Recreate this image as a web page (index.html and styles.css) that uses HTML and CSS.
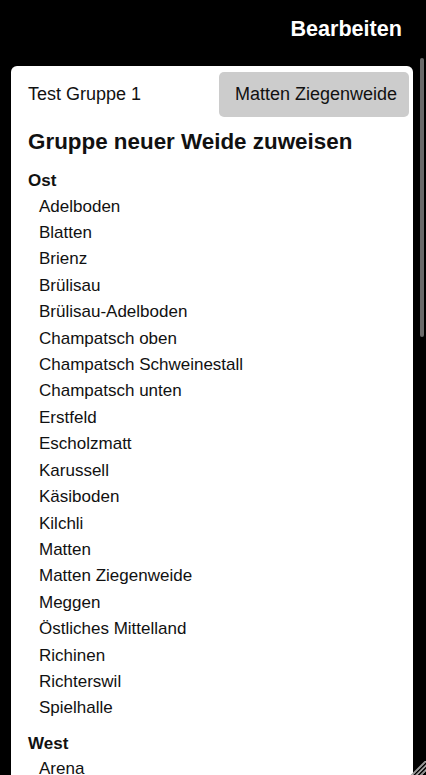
FILE: index.html
```html
<!DOCTYPE html>
<html lang="de">
<head>
<meta charset="utf-8">
<title>Bearbeiten</title>
<link rel="stylesheet" href="styles.css">
</head>
<body>
<header class="topbar">
  <h1 class="topbar-title">Bearbeiten</h1>
</header>
<div class="scroll-frame">
  <main class="scroller">
    <section class="card">
      <div class="card-row">
        <span class="group-name">Test Gruppe 1</span>
        <button class="current-btn" type="button">Matten Ziegenweide</button>
      </div>
      <h2 class="card-title">Gruppe neuer Weide zuweisen</h2>
      <div class="region">
        <h3 class="region-name">Ost</h3>
        <ul class="pasture-list">
          <li class="pasture">Adelboden</li>
          <li class="pasture">Blatten</li>
          <li class="pasture">Brienz</li>
          <li class="pasture">Brülisau</li>
          <li class="pasture">Brülisau-Adelboden</li>
          <li class="pasture">Champatsch oben</li>
          <li class="pasture">Champatsch Schweinestall</li>
          <li class="pasture">Champatsch unten</li>
          <li class="pasture">Erstfeld</li>
          <li class="pasture">Escholzmatt</li>
          <li class="pasture">Karussell</li>
          <li class="pasture">Käsiboden</li>
          <li class="pasture">Kilchli</li>
          <li class="pasture">Matten</li>
          <li class="pasture">Matten Ziegenweide</li>
          <li class="pasture">Meggen</li>
          <li class="pasture">Östliches Mittelland</li>
          <li class="pasture">Richinen</li>
          <li class="pasture">Richterswil</li>
          <li class="pasture">Spielhalle</li>
        </ul>
      </div>
      <div class="region">
        <h3 class="region-name">West</h3>
        <ul class="pasture-list">
          <li class="pasture">Arena</li>
        </ul>
      </div>
    </section>
  </main>
  <div class="scroll-thumb" aria-hidden="true"></div>
  <svg class="resize-grip" aria-hidden="true" width="16" height="14" viewBox="0 0 16 14">
    <line x1="1" y1="14.5" x2="16.5" y2="-1" stroke="#9a9a9a" stroke-width="1.2"/>
    <line x1="2.2" y1="14.5" x2="17.7" y2="-1" stroke="#e8e8e8" stroke-width="0.8"/>
    <line x1="5.5" y1="14.5" x2="17" y2="3" stroke="#9a9a9a" stroke-width="1.2"/>
    <line x1="6.7" y1="14.5" x2="18.2" y2="3" stroke="#e8e8e8" stroke-width="0.8"/>
    <line x1="10" y1="14.5" x2="17.5" y2="7" stroke="#9a9a9a" stroke-width="1.2"/>
    <line x1="11.2" y1="14.5" x2="18.7" y2="7" stroke="#e8e8e8" stroke-width="0.8"/>
  </svg>
</div>
</body>
</html>
```
FILE: styles.css
```css
html, body {
  margin: 0;
  padding: 0;
  background: #000;
  height: 100%;
  overflow: hidden;
}

body {
  font-family: "Liberation Sans", Arial, sans-serif;
  color: #111;
}

.topbar {
  box-sizing: border-box;
  height: 56px;
  padding: 17px 24px 0;
  display: flex;
  justify-content: flex-end;
}

.topbar-title {
  margin: 0;
  font-size: 21.6px;
  font-weight: bold;
  line-height: 1.1;
  color: #fff;
}

.scroll-frame {
  position: relative;
  height: 719px;
}

.scroller {
  height: 100%;
  overflow: hidden;
  background: #000;
}

.scroll-thumb {
  position: absolute;
  top: 2px;
  right: 2px;
  width: 4px;
  height: 279px;
  border-radius: 2px;
  background: #6a6a6a;
}

.resize-grip {
  position: absolute;
  right: 0;
  bottom: 0;
}

.card {
  margin: 10px 13px 20px 11px;
  padding: 6px 4px 8px 17px;
  background: #fff;
  border-radius: 6px;
}

.card-row {
  display: flex;
  align-items: center;
  justify-content: space-between;
  height: 45px;
}

.group-name {
  font-size: 18px;
}

.current-btn {
  height: 45px;
  padding: 0 12px 0 16px;
  border: none;
  border-radius: 5px;
  background: #cccccc;
  font-family: inherit;
  font-size: 18px;
  color: #111;
}

.card-title {
  margin: 11.7px 0 0;
  font-size: 22.4px;
  font-weight: bold;
  line-height: 1.15;
}

.region {
  margin-top: 13.6px;
}

.region + .region {
  margin-top: 9px;
}

.region-name {
  margin: 0;
  font-size: 17px;
  font-weight: bold;
  line-height: 25.6px;
}

.pasture-list {
  list-style: none;
  margin: 0;
  padding: 0 0 0 11px;
}

.pasture {
  font-size: 17px;
  line-height: 26.4px;
}
```
